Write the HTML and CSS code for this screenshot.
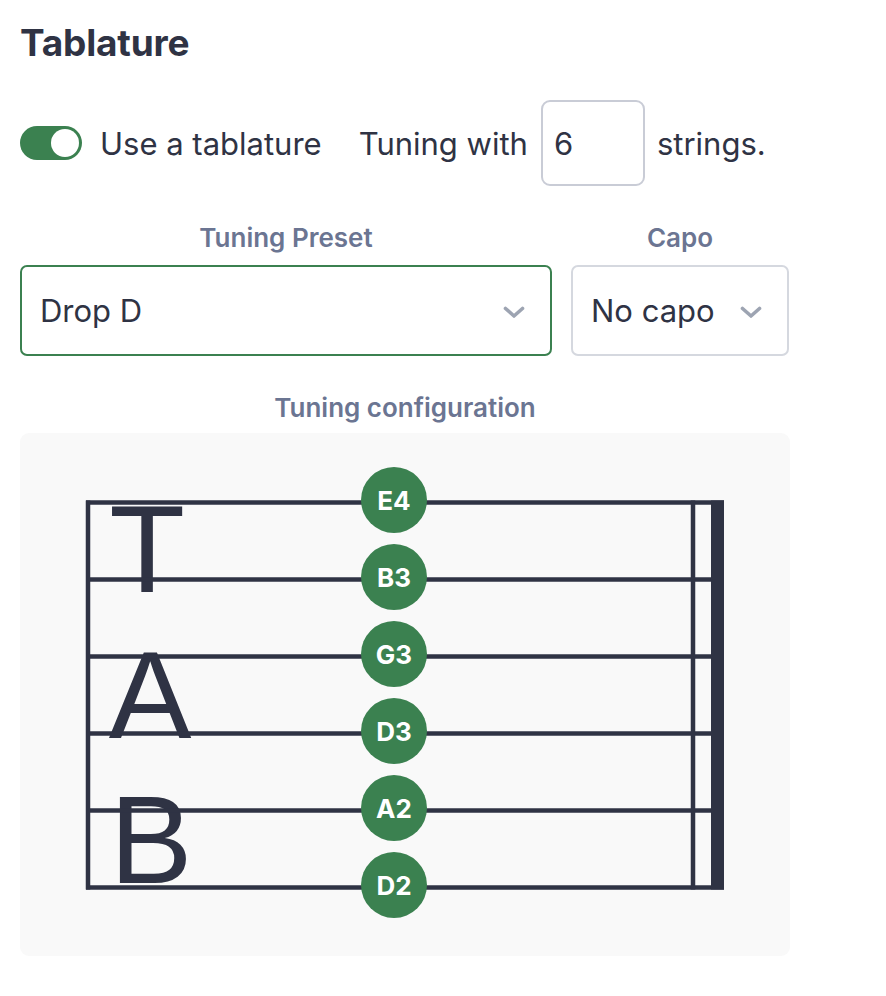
FILE: index.html
```html
<!DOCTYPE html>
<html lang="en">
<head>
<meta charset="utf-8">
<title>Tablature</title>
<link rel="stylesheet" href="styles.css">
</head>
<body>
<main class="page">
  <h1 class="title">Tablature</h1>

  <div class="tab-row">
    <label class="switch">
      <span class="switch-track"><span class="switch-knob"></span></span>
      <span class="switch-label">Use a tablature</span>
    </label>
    <span class="tuning-text">Tuning with</span>
    <div class="num-input">6</div>
    <span class="strings-text">strings.</span>
  </div>

  <div class="selects">
    <div class="field-label">Tuning Preset</div>
    <div class="field-label">Capo</div>
    <div class="select select-active">
      <span>Drop D</span>
      <svg class="chev" width="22" height="14" viewBox="0 0 22 14"><path d="M2.5 3.5 L11 11 L19.5 3.5" fill="none" stroke="#9da4b2" stroke-width="3.6" stroke-linecap="round" stroke-linejoin="round"/></svg>
    </div>
    <div class="select">
      <span>No capo</span>
      <svg class="chev" width="22" height="14" viewBox="0 0 22 14"><path d="M2.5 3.5 L11 11 L19.5 3.5" fill="none" stroke="#9da4b2" stroke-width="3.6" stroke-linecap="round" stroke-linejoin="round"/></svg>
    </div>
  </div>

  <div class="config-label">Tuning configuration</div>
  <div class="config-panel">
    <svg class="staff" width="770" height="523" viewBox="0 0 770 523">
      <g class="clef" fill="#2f3344" font-family="'Liberation Sans', Arial, sans-serif" font-size="124" text-anchor="middle">
        <text x="127" y="159">T</text>
        <text x="130" y="305">A</text>
        <text x="131" y="450">B</text>
      </g>
      <g stroke="#2f3344" stroke-width="4.5">
        <line x1="66" y1="69.5" x2="704" y2="69.5"/>
        <line x1="66" y1="146.5" x2="704" y2="146.5"/>
        <line x1="66" y1="223.5" x2="704" y2="223.5"/>
        <line x1="66" y1="300.5" x2="704" y2="300.5"/>
        <line x1="66" y1="377.5" x2="704" y2="377.5"/>
        <line x1="66" y1="454.5" x2="704" y2="454.5"/>
        <line x1="68" y1="67.5" x2="68" y2="456.5"/>
        <line x1="673" y1="67.5" x2="673" y2="456.5"/>
      </g>
      <rect x="691" y="67.5" width="13" height="389" fill="#2f3344"/>
      <g class="notes" font-family="Inter, 'Noto Sans', sans-serif" font-size="26" font-weight="700" text-anchor="middle" fill="#ffffff">
        <circle cx="374" cy="67" r="33" fill="#3b8150"/><text x="374" y="76.5">E4</text>
        <circle cx="374" cy="144" r="33" fill="#3b8150"/><text x="374" y="153.5">B3</text>
        <circle cx="374" cy="221" r="33" fill="#3b8150"/><text x="374" y="230.5">G3</text>
        <circle cx="374" cy="298" r="33" fill="#3b8150"/><text x="374" y="307.5">D3</text>
        <circle cx="374" cy="375" r="33" fill="#3b8150"/><text x="374" y="384.5">A2</text>
        <circle cx="374" cy="452" r="33" fill="#3b8150"/><text x="374" y="461.5">D2</text>
      </g>
    </svg>
  </div>
</main>
</body>
</html>
```

FILE: styles.css
```css
* {
  box-sizing: border-box;
}

html, body {
  margin: 0;
  padding: 0;
  background: #ffffff;
}

body {
  font-family: Inter, "Noto Sans", sans-serif;
  color: #2f3344;
}

.page {
  width: 770px;
  margin-left: 20px;
  padding-top: 21px;
}

.title {
  margin: 0;
  font-size: 37px;
  line-height: 44px;
  font-weight: 700;
  letter-spacing: -0.2px;
}

.tab-row {
  margin-top: 35px;
  display: flex;
  align-items: center;
  height: 86px;
  font-size: 31px;
}

.switch {
  display: flex;
  align-items: center;
  gap: 18px;
}

.switch-track {
  position: relative;
  width: 62px;
  height: 34px;
  border-radius: 17px;
  background: #3b8150;
  display: block;
}

.switch-knob {
  position: absolute;
  top: 3px;
  right: 3px;
  width: 28px;
  height: 28px;
  border-radius: 50%;
  background: #ffffff;
}

.tuning-text {
  margin-left: 37px;
}

.num-input {
  margin-left: 13px;
  width: 104px;
  height: 86px;
  border: 2px solid #c9ccd6;
  border-radius: 9px;
  padding-left: 11px;
  display: flex;
  align-items: center;
}

.strings-text {
  margin-left: 12px;
}

.selects {
  margin-top: 35px;
  display: grid;
  grid-template-columns: 532px 218px;
  column-gap: 19px;
  row-gap: 10px;
}

.field-label {
  text-align: center;
  font-size: 26px;
  line-height: 34px;
  font-weight: 600;
  color: #6b7592;
}

.select {
  height: 91px;
  border: 2px solid #d5d8df;
  border-radius: 7px;
  display: flex;
  align-items: center;
  justify-content: space-between;
  padding: 0 25px 0 18px;
  font-size: 31px;
}

.select-active {
  border-color: #3b8150;
}

.chev {
  display: block;
  margin-top: 2px;
}

.config-label {
  margin-top: 35px;
  text-align: center;
  font-size: 26px;
  line-height: 34px;
  font-weight: 600;
  color: #6b7592;
}

.config-panel {
  margin-top: 8px;
  height: 523px;
  background: #f9f9f9;
  border-radius: 9px;
}

.staff {
  display: block;
}
```
